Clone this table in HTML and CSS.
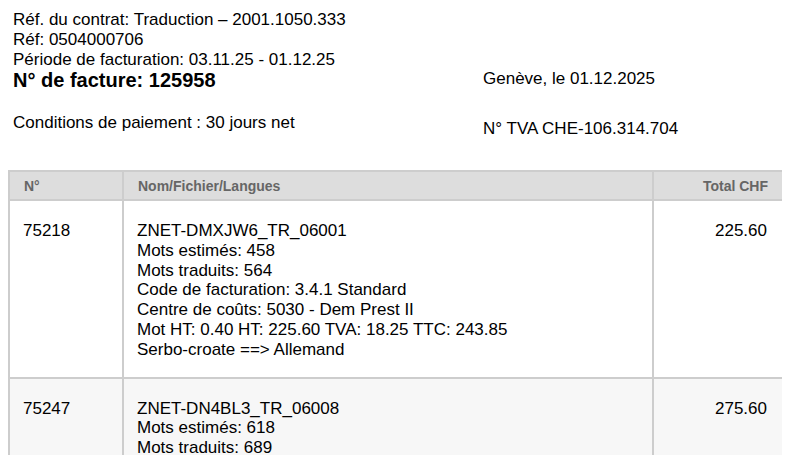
FILE: index.html
```html
<!DOCTYPE html>
<html lang="fr">
<head>
<meta charset="utf-8">
<link rel="stylesheet" href="styles.css">
</head>
<body>
<div class="head">
  <div class="left">
    <div class="line">Réf. du contrat: Traduction – 2001.1050.333</div>
    <div class="line">Réf: 0504000706</div>
    <div class="line">Période de facturation: 03.11.25 - 01.12.25</div>
    <div class="title">N° de facture: 125958</div>
    <div class="cond">Conditions de paiement : 30 jours net</div>
  </div>
  <div class="right">
    <div class="line">Genève, le 01.12.2025</div>
    <div class="line tva">N° TVA CHE-106.314.704</div>
  </div>
</div>
<table class="inv">
  <thead>
    <tr><th class="c1">N°</th><th class="c2">Nom/Fichier/Langues</th><th class="c3">Total CHF</th></tr>
  </thead>
  <tbody>
    <tr>
      <td class="c1">75218</td>
      <td class="c2">ZNET-DMXJW6_TR_06001<br>Mots estimés: 458<br>Mots traduits: 564<br>Code de facturation: 3.4.1 Standard<br>Centre de coûts: 5030 - Dem Prest II<br>Mot HT: 0.40 HT: 225.60 TVA: 18.25 TTC: 243.85<br>Serbo-croate ==&gt; Allemand</td>
      <td class="c3">225.60</td>
    </tr>
    <tr class="alt">
      <td class="c1">75247</td>
      <td class="c2">ZNET-DN4BL3_TR_06008<br>Mots estimés: 618<br>Mots traduits: 689<br>Code de facturation: 3.4.1 Standard<br>Centre de coûts: 5030 - Dem Prest II</td>
      <td class="c3">275.60</td>
    </tr>
  </tbody>
</table>
</body>
</html>
```
FILE: styles.css
```css
html, body { background: #fff; }
body {
  margin: 0 8px;
  font-family: "Liberation Sans", Arial, sans-serif;
  font-size: 17px;
  color: #000;
  overflow: hidden;
}
.head {
  display: flex;
  align-items: flex-start;
  padding: 10px 5px 0;
}
.left { width: 470px; }
.right { padding-top: 59px; }
.line { line-height: 20px; }
.title { font-weight: bold; font-size: 20px; line-height: 20px; }
.cond { margin-top: 23px; line-height: 20px; }
.tva { margin-top: 30px; }
.inv {
  margin-top: 31px;
  width: 777px;
  border-collapse: collapse;
  border: 2px solid #cdcdcd;
}
.inv th, .inv td { border: 2px solid #cdcdcd; }
.inv th {
  background: #dddddd;
  color: #666;
  font-size: 14px;
  font-weight: bold;
  height: 27px;
  padding: 0 14px;
  text-align: left;
}
.inv th.c3 { text-align: right; padding-right: 15px; }
.inv td {
  vertical-align: top;
  line-height: 19.8px;
  padding: 20px 14px 17px 13px;
}
.inv .c1 { width: 84px; }
.inv .c3 { width: 100px; text-align: right; }
.inv td.c3 { padding-right: 16px; }
.alt td { background: #f7f7f7; }
```
